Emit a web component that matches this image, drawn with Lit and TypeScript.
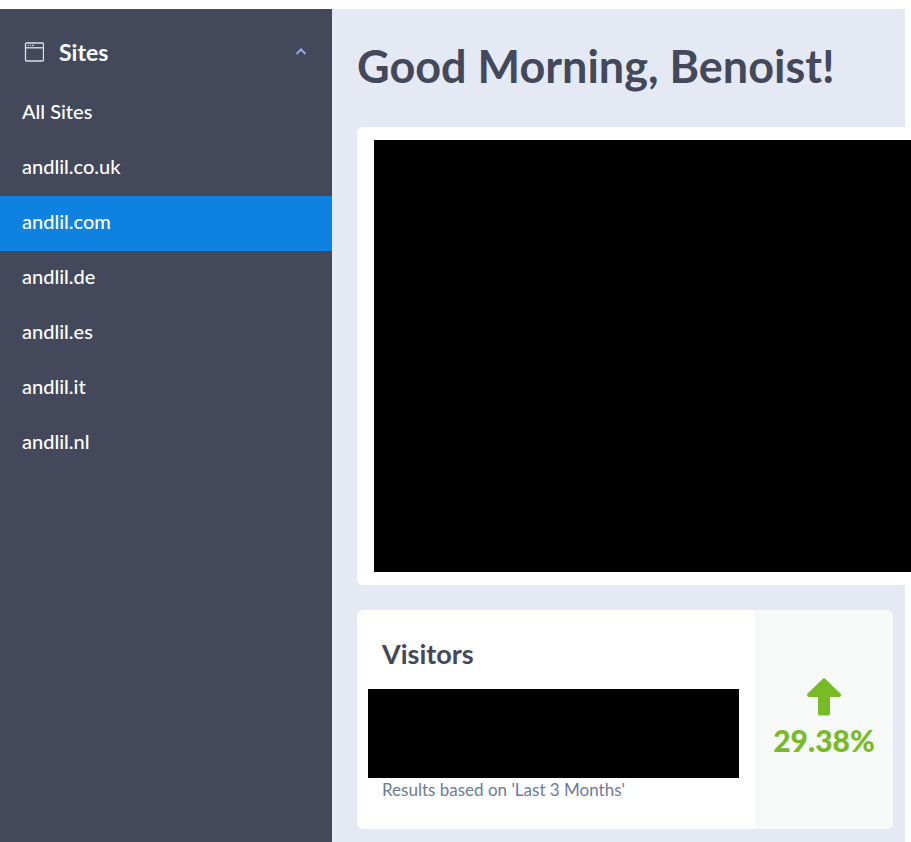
import { LitElement, html, css } from "lit";
import { customElement, state } from "lit/decorators.js";
import { classMap } from "lit/directives/class-map.js";

const SITES = [
  "All Sites",
  "andlil.co.uk",
  "andlil.com",
  "andlil.de",
  "andlil.es",
  "andlil.it",
  "andlil.nl",
];

@customElement("site-nav")
export class SiteNav extends LitElement {
  @state() private selected = "andlil.com";
  @state() private open = true;

  static styles = css`
    :host {
      display: block;
      background: #43495b;
      color: #fff;
    }
    .toggle {
      display: flex;
      align-items: center;
      width: 100%;
      height: 77px;
      padding: 9px 24px 0;
      border: 0;
      background: none;
      color: inherit;
      font: 700 23px/28px Lato, sans-serif;
      text-align: left;
      cursor: pointer;
    }
    .window {
      width: 20px;
      height: 20px;
      margin-right: 15px;
    }
    .title {
      flex: 1;
    }
    .chevron {
      width: 14px;
      height: 10px;
    }
    .chevron.closed {
      transform: rotate(180deg);
    }
    ul {
      margin: 0;
      padding: 0;
      list-style: none;
    }
    a {
      display: block;
      padding: 0 22px 4px;
      color: #fff;
      font: 500 20px/51px Lato, sans-serif;
      text-decoration: none;
    }
    a.current {
      background: #0e82e0;
    }
  `;

  private pick(event: Event, site: string) {
    event.preventDefault();
    this.selected = site;
  }

  render() {
    return html`
      <nav aria-label="Sites">
        <button
          class="toggle"
          aria-expanded=${this.open}
          @click=${() => (this.open = !this.open)}
        >
          <svg class="window" viewBox="0 0 20 20" fill="none" aria-hidden="true">
            <rect x="1.5" y="1" width="18" height="18" rx="1" stroke="#dfe1e6" stroke-width="1.3" />
            <path d="M1.5 5.8h18" stroke="#dfe1e6" stroke-width="1.3" />
            <path d="M4 3.4h1.2M6.2 3.4h1M8 3.4h2" stroke="#dfe1e6" />
          </svg>
          <span class="title">Sites</span>
          <svg
            class=${classMap({ chevron: true, closed: !this.open })}
            viewBox="0 0 14 10"
            fill="none"
            aria-hidden="true"
          >
            <path d="M2.500 7 7 2.500 11.500 7" stroke="#91aae0" stroke-width="2" />
          </svg>
        </button>
        <ul ?hidden=${!this.open}>
          ${SITES.map(
            (site) => html`
              <li>
                <a
                  href="#"
                  class=${classMap({ current: site === this.selected })}
                  @click=${(e: Event) => this.pick(e, site)}
                  >${site}</a
                >
              </li>
            `,
          )}
        </ul>
      </nav>
    `;
  }
}

@customElement("app-root")
export class AppRoot extends LitElement {
  static styles = css`
    :host {
      display: grid;
      grid-template-columns: 332px minmax(0, 1fr);
      box-sizing: border-box;
      min-height: 100vh;
      padding: 9px 6px 0 0;
      background: #fff;
      color: #43495b;
      font-family: Lato, sans-serif;
    }
    main {
      padding: 0 0 13px 25px;
      background: #e5e9f4;
    }
    h1 {
      margin: 0;
      padding: 27px 0 31px;
      font-size: 45px;
      line-height: 60px;
      font-weight: 700;
      white-space: nowrap;
    }
    .chart {
      margin-right: -6px;
      padding: 13px 0 13px 17px;
      border-radius: 6px 0 0 6px;
      background: #fff;
    }
    .redacted {
      background: #000;
    }
    .chart .redacted {
      height: 432px;
    }
    .stat {
      display: flex;
      margin: 25px 12px 0 0;
      border-radius: 6px;
      background: #fff;
      overflow: hidden;
    }
    .detail {
      flex: 1;
      padding: 27px 16px 27px 11px;
    }
    h2 {
      margin: 0 14px 18px;
      font-size: 27px;
      line-height: 34px;
      font-weight: 700;
    }
    .detail .redacted {
      height: 89px;
    }
    p {
      margin: 0 14px;
      color: #6c7a99;
      font-size: 17px;
      line-height: 24px;
    }
    .trend {
      display: flex;
      flex-direction: column;
      align-items: center;
      justify-content: center;
      gap: 6px;
      box-sizing: border-box;
      width: 138px;
      padding-bottom: 3px;
      background: #f6f9f7;
      color: #78bb25;
      font-size: 30px;
      line-height: 36px;
      font-weight: 900;
    }
    .arrow {
      width: 34px;
      height: 38px;
    }
  `;

  render() {
    return html`
      <site-nav></site-nav>
      <main>
        <h1>Good Morning, Benoist!</h1>
        <section class="chart"><div class="redacted"></div></section>
        <section class="stat">
          <div class="detail">
            <h2>Visitors</h2>
            <div class="redacted"></div>
            <p>Results based on 'Last 3 Months'</p>
          </div>
          <div class="trend">
            <svg class="arrow" viewBox="0 0 34 38" aria-hidden="true">
              <path
                fill="currentColor"
                d="M15.600 1a2 2 0 0 1 2.800 0L33.400 15.600c1.200 1.400.5 3.400-1.400 3.400h-9v16.500a2 2 0 0 1-2 2h-8a2 2 0 0 1-2-2V19H2C.1 19-.6 17 .6 15.600z"
              />
            </svg>
            <span>29.38%</span>
          </div>
        </section>
      </main>
    `;
  }
}
